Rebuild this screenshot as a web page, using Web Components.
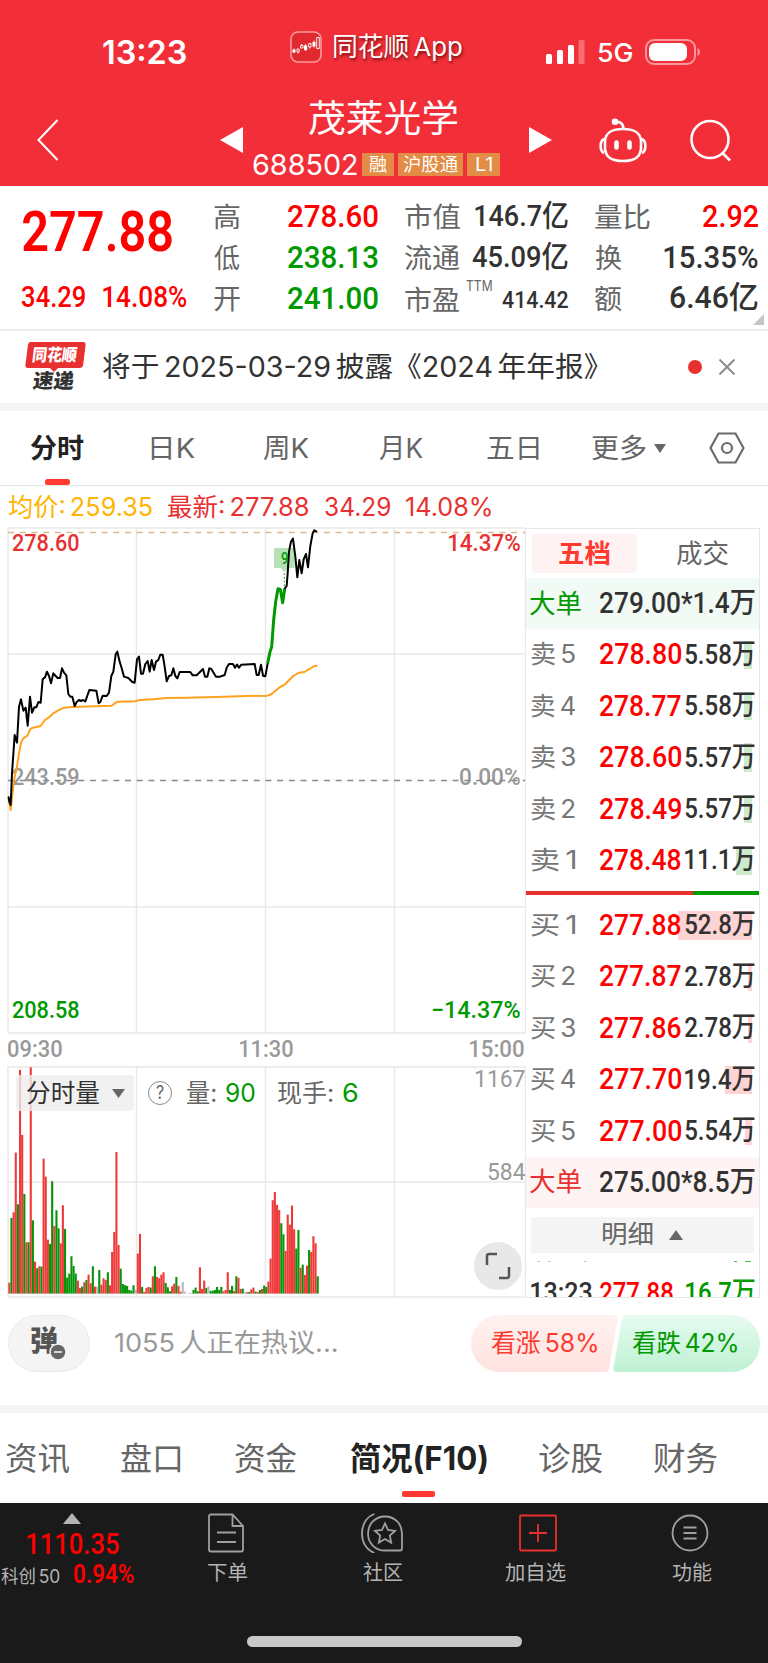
<!DOCTYPE html>
<html lang="zh-CN">
<head>
<meta charset="utf-8">
<meta name="viewport" content="width=device-width">
<title>茂莱光学 688502</title>
<style>
    html, body {
        margin: 0;
        background: #fff;
    }

    body {
        width: 768px;
        height: 1663px;
        overflow: hidden;
        font-family: Inter, "Noto Sans CJK SC", sans-serif;
        color: #323232;
    }
</style>
</head>
<body>
<stock-app></stock-app>

<script>
const NUM_FONT = 'Roboto, "Noto Sans CJK SC", sans-serif'
const pen = document.createElement('canvas').getContext('2d')

class BaseElement extends HTMLElement {
    constructor(){
        super()
        this.attachShadow({ mode: "open" })
    }

    render(){
        const template = document.createElement('template')
        template.innerHTML = `<style>${this.getStyles()}</style>${this.getTemplate()}`
        this.shadowRoot.appendChild(template.content.cloneNode(true))
    }

    connectedCallback(){
        this.render()
    }
}

// One line of text stretched so that its ink is exactly "w" pixels wide
class FitText extends BaseElement {
    getTemplate(){
        return `<span><slot></slot></span>`
    }

    getStyles(){
        const num = this.hasAttribute('num') ? `font-family: ${NUM_FONT};` : ''
        return `
            :host {
                display: block;
                flex: none;
                width: ${this.getAttribute('w')}px;
                margin-left: ${this.getAttribute('gap') || 0}px;
                font-size: ${this.getAttribute('size')}px;
                font-weight: ${this.getAttribute('weight') || 400};
                line-height: 1;
                white-space: nowrap;
                ${num}
            }
            span {
                display: inline-block;
                line-height: 1;
                vertical-align: top;
                word-spacing: ${this.getSpacing()}px;
                transform-origin: 0 50%;
            }
        `
    }

    // Spaces between Chinese and digits are drawn thin
    getSpacing(){
        return this.getAttribute('size') * -.12
    }

    connectedCallback(){
        super.connectedCallback()
        const style = getComputedStyle(this)
        pen.font = `${style.fontWeight} ${style.fontSize} ${style.fontFamily}`
        pen.wordSpacing = `${this.getSpacing()}px`
        const m = pen.measureText(this.textContent)
        const scale = this.getAttribute('w') / (m.actualBoundingBoxLeft + m.actualBoundingBoxRight)
        const dy = this.getAttribute('dy') || 0
        this.shadowRoot.querySelector('span').style.transform =
            `translate(${m.actualBoundingBoxLeft * scale}px, ${dy}px) scaleX(${scale})`
    }
}

class StatusBar extends BaseElement {
    getTemplate(){
        return `
            <fit-text gap="103" w="83" size="32" weight="600" dy="1">13:23</fit-text>
            <svg class="app" width="32" height="32" viewBox="0 0 32 32" fill="none" stroke="#fff">
                <rect x="1" y="1" width="30" height="30" rx="7" fill="#e02a2f" stroke="#f99a9d" stroke-width="1.6"/>
                <path d="M2.500 18.500h3v3h-3zM14 14.500h3.200v4.500H14zM22.500 11h3v4.500h-3z" fill="#fff" stroke="none"/>
                <path d="M7 18h2.200v3H7zM10.500 14.500H13V17h-2.500zM18.700 12.500h2.300v3.500h-2.300zM26.700 6.500h2.600v11h-2.600zM4 17.500v4.500M8 21v1.500M11.800 13v1.500M15.600 13v7M19.900 16v1.500M24 9.500v7" stroke-width=".9"/>
            </svg>
            <fit-text class="shadow" gap="12" w="128" size="26" dy="-5">同花顺 App</fit-text>
            <svg class="signal" width="39" height="24" viewBox="0 0 39 24" fill="#fff">
                <rect y="14" width="6" height="10" rx="1.500"/>
                <rect x="11" y="10" width="6" height="14" rx="1.500"/>
                <rect x="22" y="5" width="6" height="19" rx="1.500"/>
                <rect x="32.500" width="6" height="24" rx="1.500" opacity=".3"/>
            </svg>
            <fit-text gap="13" w="34" size="26" weight="500" dy="1">5G</fit-text>
            <svg class="battery" width="56" height="26" viewBox="0 0 56 26" fill="#fff">
                <rect x="1" y="1" width="49" height="24" rx="8" fill="none" stroke="#fff" stroke-opacity=".5" stroke-width="2"/>
                <rect x="4" y="4" width="38" height="18" rx="6"/>
                <path d="M52.500 9q2.500 1 2.500 4t-2.500 4z" opacity=".5"/>
            </svg>
        `
    }

    getStyles(){
        return `
            :host {
                display: flex;
                align-items: center;
                height: 84px;
                padding-top: 10px;
            }
            .app { margin: -11px 0 0 104px; }
            .shadow { text-shadow: 1px 2px 3px rgba(60, 0, 0, .7); }
            .signal { margin-left: 84px; }
            .battery { margin-left: 13px; }
        `
    }
}

class StockNav extends BaseElement {
    getTemplate(){
        return `
            <svg class="back" width="22" height="42" viewBox="0 0 22 42" fill="none" stroke="#fff" stroke-width="2">
                <path d="M20.500 1L1.500 21l19 20"/>
            </svg>
            <svg class="prev" width="23" height="26"><path d="M23 0v26L0 13z" fill="#fff"/></svg>
            <div class="name">
                <fit-text gap="66" w="148" size="37" dy="1">茂莱光学</fit-text>
                <div class="code">
                    <fit-text w="104" size="29">688502</fit-text>
                    <i style="width:32px;margin-left:1px"><fit-text w="18" size="18">融</fit-text></i>
                    <i style="width:65px"><fit-text w="55" size="18">沪股通</fit-text></i>
                    <i style="width:33px"><fit-text w="16" size="18">L1</fit-text></i>
                </div>
            </div>
            <svg class="next" width="23" height="26"><path d="M0 0v26l23-13z" fill="#fff"/></svg>
            <svg class="robot" width="48" height="45" viewBox="0 0 48 45" fill="none" stroke="#fff" stroke-width="2.600">
                <path d="M24 11C35 11 40.500 14 42 22v9C41 40 35 43 24 43S7 40 6 31v-9C7.500 14 13 11 24 11z"/>
                <path d="M5 21c-4.500 2-4.500 12 0 14M43 21c4.500 2 4.500 12 0 14M24.500 10.500C24 6 21.500 3.500 17 4"/>
                <path d="M17.500 24.500v5M30.500 24.500v5" stroke-width="4.600" stroke-linecap="round"/>
                <circle cx="16" cy="3.800" r="3.300" fill="#fff" stroke="none"/>
            </svg>
            <svg class="search" width="42" height="43" viewBox="0 0 42 43" fill="none" stroke="#fff" stroke-width="2.600">
                <circle cx="20" cy="20.500" r="18.500"/>
                <path d="M32.500 34l7.500 7.500"/>
            </svg>
        `
    }

    getStyles(){
        return `
            :host {
                display: flex;
                align-items: center;
                height: 92px;
            }
            .back { margin-left: 37px; }
            .prev { margin-left: 161px; }
            .name {
                width: 286px;
                height: 92px;
                padding-top: 5px;
                box-sizing: border-box;
            }
            .code {
                display: flex;
                align-items: center;
                height: 23px;
                gap: 4px;
                margin: 17px 0 0 10px;
            }
            .code i {
                display: flex;
                align-items: center;
                justify-content: center;
                height: 23px;
                background: #e28c45;
                font-style: normal;
            }
            .next { margin-left: 0; }
            .robot { margin-left: 47px; }
            .search { margin-left: 43px; }
        `
    }
}

class QuotePanel extends BaseElement {
    getTemplate(){
        return `
            <div class="main red">
                <fit-text num gap="1" w="149" size="55" weight="600" dy="1">277.88</fit-text>
                <div class="sub">
                    <fit-text num w="63" size="29" weight="500">34.29</fit-text>
                    <fit-text num gap="18" w="84" size="29" weight="500">14.08%</fit-text>
                </div>
            </div>
            <div class="col" style="width:164px">
                <p><fit-text w="26" size="27" dy="2">高</fit-text><fit-text class="red" num w="90" size="32" weight="500">278.60</fit-text></p>
                <p><fit-text w="26" size="27" dy="2">低</fit-text><fit-text class="green" num w="90" size="32" weight="500">238.13</fit-text></p>
                <p><fit-text w="26" size="27" dy="2">开</fit-text><fit-text class="green" num w="90" size="32" weight="500">241.00</fit-text></p>
            </div>
            <div class="col" style="width:163px">
                <p><fit-text w="55" size="27" dy="2">市值</fit-text><fit-text class="dark" num w="93" size="30" weight="500">146.7亿</fit-text></p>
                <p><fit-text w="55" size="27" dy="2">流通</fit-text><fit-text class="dark" num w="96" size="30" weight="500">45.09亿</fit-text></p>
                <p><fit-text w="54" size="27" dy="3">市盈</fit-text><fit-text class="ttm" gap="7" w="26" size="14" dy="-12">TTM</fit-text><fit-text class="dark" num w="66" size="24" weight="500" dy="2">414.42</fit-text></p>
            </div>
            <div class="col" style="width:163px">
                <p><fit-text w="55" size="27" dy="2">量比</fit-text><fit-text class="red" num w="55" size="32" weight="500">2.92</fit-text></p>
                <p><fit-text w="27" size="27" dy="2">换</fit-text><fit-text class="dark" num w="94" size="32" weight="500">15.35%</fit-text></p>
                <p><fit-text w="27" size="27" dy="2">额</fit-text><fit-text class="dark" num w="88" size="31" weight="500">6.46亿</fit-text></p>
            </div>
            <svg class="corner" width="11" height="11"><path d="M11 0v11H0z" fill="#c4c4c4"/></svg>
        `
    }

    getStyles(){
        return `
            :host {
                display: flex;
                gap: 27px;
                height: 145px;
                padding: 9px 0 0 22px;
                box-sizing: border-box;
                border-bottom: 2px solid #ededed;
                color: #666;
                position: relative;
            }
            .red { color: #fe0000; }
            .green { color: #009900; }
            .dark { color: #323232; }
            .main { width: 165px; padding-top: 9px; }
            .sub { display: flex; margin-top: 24px; }
            .col p {
                display: flex;
                align-items: center;
                justify-content: space-between;
                margin: 0;
                height: 41px;
            }
            .ttm { margin-right: auto; }
            .corner { position: absolute; right: 4px; bottom: 4px; }
        `
    }
}

class NewsBar extends BaseElement {
    getTemplate(){
        return `
            <div class="badge">
                <svg width="61" height="31" viewBox="0 0 61 31">
                    <path d="M6 0h52q3 0 2.600 3l-2.500 20q-.5 3-3.500 3H33l-4 4-4-4H3q-3 0-2.600-3L3 3q.5-3 3-3z" fill="#e93030"/>
                </svg>
                <fit-text class="brand" w="44" size="17" weight="900">同花顺</fit-text>
                <fit-text class="fast" gap="8" w="41" size="20" weight="900">速递</fit-text>
            </div>
            <fit-text gap="17" w="495" size="28">将于 2025-03-29 披露《2024 年年报》</fit-text>
            <b></b>
            <svg class="close" width="16" height="16" viewBox="0 0 16 16" stroke="#8d8d8d" stroke-width="2">
                <path d="M.5.500l15 15M15.500.500l-15 15"/>
            </svg>
        `
    }

    getStyles(){
        return `
            :host {
                display: flex;
                align-items: center;
                height: 72px;
                border-bottom: 8px solid #f4f4f4;
            }
            .badge {
                width: 61px;
                height: 50px;
                margin-left: 25px;
                position: relative;
            }
            .badge svg { display: block; }
            .brand { position: absolute; left: 8px; top: 5px; color: #fff; transform: skewX(-7deg); }
            .fast { margin-top: -2px; transform: skewX(-7deg); }
            b {
                width: 14px;
                height: 14px;
                margin-left: 90px;
                border-radius: 50%;
                background: #e93030;
            }
            .close { margin-left: 17px; }
        `
    }
}

class PeriodTabs extends BaseElement {
    getTemplate(){
        return `
            <fit-text class="on" gap="30" w="54" size="27" weight="700">分时</fit-text>
            <fit-text gap="67" w="44" size="27">日K</fit-text>
            <fit-text gap="68" w="46" size="27">周K</fit-text>
            <fit-text gap="70" w="44" size="27">月K</fit-text>
            <fit-text gap="64" w="52" size="27">五日</fit-text>
            <fit-text gap="53" w="54" size="27">更多</fit-text>
            <svg class="more" width="12" height="9"><path d="M0 0h12L6 9z" fill="#666"/></svg>
            <svg class="gear" width="36" height="32" viewBox="0 0 36 32" fill="none" stroke="#6b6b6b" stroke-width="2.200">
                <path d="M9.500 1.500h17L34.500 16l-8 14.500h-17L1.500 16z"/>
                <circle cx="18" cy="16" r="5"/>
            </svg>
            <u></u>
        `
    }

    getStyles(){
        return `
            :host {
                display: flex;
                align-items: center;
                height: 74px;
                border-bottom: 1px solid #e4e4e4;
                color: #666;
                position: relative;
            }
            .on { color: #222; }
            .more { margin-left: 8px; }
            .gear { margin-left: 43px; }
            u {
                position: absolute;
                left: 45px;
                bottom: 0;
                width: 25px;
                height: 6px;
                border-radius: 2.500px;
                background: #ff3a30;
            }
        `
    }
}

class PriceSummary extends BaseElement {
    getTemplate(){
        return `
            <fit-text class="avg" gap="8" w="144" size="25" dy="1">均价: 259.35</fit-text>
            <fit-text gap="16" w="140" size="25" dy="1">最新: 277.88</fit-text>
            <fit-text gap="17" w="65" size="25" dy="1">34.29</fit-text>
            <fit-text gap="16" w="85" size="25" dy="1">14.08%</fit-text>
        `
    }

    getStyles(){
        return `
            :host {
                display: flex;
                align-items: center;
                height: 41px;
                color: #e93030;
            }
            .avg { color: #ffb400; }
        `
    }
}

// Lines are plotted on a 3x grid whose origin is 8px above the frame
const PRICE = '26,832 28,845 32,855 36,760 44,645 51,668 57,560 63,538 70,572 77,563 83,617 90,530 96,578 103,562 109,562 115,546 122,548 128,478 135,472 141,455 147,468 153,490 160,460 167,468 173,474 180,474 186,445 192,458 199,466 205,522 211,530 217,530 224,558 230,546 237,540 243,543 249,540 256,544 268,510 289,512 296,550 301,546 308,527 320,528 327,518 334,468 340,455 347,403 352,395 359,425 366,448 372,470 385,474 397,486 404,488 411,418 417,410 423,461 429,461 436,432 443,423 449,455 455,420 462,450 468,425 475,420 481,404 488,404 494,440 500,484 507,468 514,466 520,445 526,468 532,475 539,456 571,456 578,466 590,466 609,447 615,470 622,470 628,445 634,447 648,470 660,470 674,465 680,443 687,432 699,432 705,443 711,434 717,443 724,434 764,432 770,465 776,465 783,434 789,467 796,469 803,430'
const RALLY = '803,430 810,395 815,380 821,300 827,245 834,206 841,208 848,248 854,206'
const LAST = '854,206 860,198 863,160 867,95 873,65 879,56 886,110 892,172 898,120 905,160 911,118 918,102 924,142 931,78 938,40 943,31 949,34'
const AVERAGE = '26,835 32,870 38,815 44,770 50,745 57,700 64,665 70,655 83,646 90,628 96,624 122,618 135,600 147,592 160,580 173,572 192,563 217,561 335,557 352,545 405,544 420,540 460,538 500,534 560,533 650,531 740,528 803,527 815,522 840,501 855,493 880,468 895,459 915,455 943,438 950,437'

class PriceChart extends BaseElement {
    getTemplate(){
        return `
            <div class="plot">
                <span class="mid left"><fit-text num w="67" size="24" weight="500">243.59</fit-text></span>
                <span class="mid right"><fit-text num w="60" size="24" weight="500">0.00%</fit-text></span>
                <svg width="526" height="508" viewBox="0 527 526 508" fill="none">
                    <path d="M8 528h518M8 654h518M8 907h518M8 1033h518M8 528v505M136.500 528v505M265.500 528v505M394.500 528v505M525.500 528v505" stroke="#e9e9e9" stroke-width="1.500"/>
                    <path d="M8 532.500h517" stroke="#dcbb8b" stroke-width="1.300" stroke-dasharray="6 5.700"/>
                    <path d="M8 780.500h517" stroke="#888" stroke-width="1.300" stroke-dasharray="6 5.700"/>
                    <g transform="translate(0 520) scale(.33333)" stroke-linejoin="round" stroke-linecap="round">
                        <path d="M826 84h54q4 0 4 4v52q0 4-4 4h-16l-11 13-11-13h-16q-4 0-4-4V88q0-4 4-4z" fill="#b5e1b5"/>
                        <path d="M853 160v40" stroke="#009900" stroke-width="3" stroke-dasharray="5 6" stroke-linecap="butt"/>
                        <polyline points="${AVERAGE}" stroke="#ffa21d" stroke-width="6"/>
                        <polyline points="${PRICE}" stroke="#000" stroke-width="6"/>
                        <polyline points="${LAST}" stroke="#000" stroke-width="6"/>
                        <polyline points="${RALLY}" stroke="#009900" stroke-width="9" stroke-linecap="butt"/>
                    </g>
                </svg>
                <span class="flag"><fit-text num w="7" size="17" weight="500">9</fit-text></span>
                <span class="top left red"><fit-text num w="67" size="24" weight="500">278.60</fit-text></span>
                <span class="top right red"><fit-text num w="71" size="24" weight="500">14.37%</fit-text></span>
                <span class="low left green"><fit-text num w="67" size="24" weight="500">208.58</fit-text></span>
                <span class="low right green"><fit-text num w="88" size="24" weight="500">−14.37%</fit-text></span>
            </div>
            <div class="times">
                <fit-text num w="54" size="24" weight="500">09:30</fit-text>
                <fit-text num w="53" size="24" weight="500">11:30</fit-text>
                <fit-text num w="54" size="24" weight="500">15:00</fit-text>
            </div>
        `
    }

    getStyles(){
        return `
            :host { display: block; height: 539px; color: #999; }
            .plot { position: relative; height: 508px; }
            svg { display: block; position: relative; }
            span { position: absolute; }
            .left { left: 12px; }
            .right { right: 6px; }
            .top { top: 4px; }
            .mid { top: 237.500px; }
            .low { top: 471px; }
            .red { color: #e93030; }
            .green, .flag { color: #009900; }
            .flag { left: 281px; top: 23px; }
            .times {
                display: flex;
                justify-content: space-between;
                padding: 2px 2px 0 8px;
            }
        `
    }
}

// r: up, g: down, s: flat; the number is the height in thirds of a pixel
const VOLUME = 'r33 g227 r244 r423 g268 r671 r476 g299 r154 g154 r679 g220 r96 g76 r82 g81 r405 r351 r162 g149 g337 r203 g250 g196 r151 r265 g194 g48 g60 g112 g83 g60 r39 r17 g21 r34 g41 r57 r31 g82 r21 s21 g71 r27 r46 r41 g64 r25 r125 r185 r425 r146 g75 g29 g25 g23 g11 g9 g25 s11 r120 r179 g20 r5 r17 r20 g18 r52 g82 r50 r46 r57 r64 g32 g19 g7 r22 r30 g50 r23 r6 s35 s6 s0 s2 s2 g11 g18 g7 r79 r14 r39 g17 s22 g8 g9 g11 g20 g11 g20 r7 r11 r64 g11 g23 r8 g52 r47 r14 g15 s4 r4 g5 r13 r18 g6 r5 g11 r14 g24 g20 r36 r105 r280 r305 r266 r251 g211 g178 r128 r237 r207 r264 r193 g135 g191 r77 g87 r56 r84 g131 r125 r172 r151 g52'
const VOLUME_COLORS = { r: '#ee3a3a', g: '#089308', s: '#bbb' }

class VolumeChart extends BaseElement {
    getBars(){
        return VOLUME.split(' ').map((bar, i) => {
            const h = bar.slice(1) / 3
            const x = 8.300 + i * 2.1413
            return `<rect x="${x.toFixed(2)}" y="${(1293.6 - h).toFixed(2)}" width="2.1" height="${h.toFixed(2)}" fill="${VOLUME_COLORS[bar[0]]}"/>`
        }).join('')
    }

    getTemplate(){
        return `
            <svg class="chart" width="526" height="232" viewBox="0 1066 526 232">
                <path d="M8 1067h518M8 1182h518M8 1297h518M8 1066v231M136.500 1066v231M265.500 1066v231M394.500 1066v231M525.500 1066v231" stroke="#e9e9e9" stroke-width="1.500" fill="none"/>
                ${this.getBars()}
            </svg>
            <div class="tools">
                <div class="pick">
                    <fit-text w="72" size="25">分时量</fit-text>
                    <svg width="13" height="9"><path d="M0 0h13L6.500 9z" fill="#666"/></svg>
                </div>
                <div class="help"><fit-text w="8" size="18">?</fit-text></div>
                <fit-text gap="15" w="29" size="25">量:</fit-text>
                <fit-text class="green" gap="10" w="29" size="25">90</fit-text>
                <fit-text gap="23" w="55" size="25">现手:</fit-text>
                <fit-text class="green" gap="10" w="14" size="25">6</fit-text>
            </div>
            <div class="max"><fit-text num w="49" size="24">1167</fit-text></div>
            <div class="half"><fit-text num w="37" size="24">584</fit-text></div>
            <svg class="expand" width="48" height="48" fill="none" stroke="#555" stroke-width="2.500">
                <circle cx="24" cy="24" r="24" fill="#e8e8e8" stroke="none"/>
                <path d="M13 23v-9q0-2 2-2h8M35 25v9q0 2-2 2h-8"/>
            </svg>
        `
    }

    getStyles(){
        return `
            :host { display: block; position: relative; height: 232px; }
            .chart { display: block; }
            .tools {
                position: absolute;
                left: 16px;
                top: 9px;
                display: flex;
                align-items: center;
                color: #666;
            }
            .pick {
                display: flex;
                align-items: center;
                gap: 13px;
                width: 107px;
                height: 36px;
                padding-left: 11px;
                border-radius: 4px;
                background: rgba(238, 238, 238, .8);
                color: #323232;
            }
            .help {
                display: flex;
                align-items: center;
                justify-content: center;
                width: 22px;
                height: 22px;
                margin-left: 14px;
                border: 1.500px solid #888;
                border-radius: 50%;
            }
            .green { color: #009900; }
            .max, .half { position: absolute; right: 1px; color: #999; }
            .max { top: 1px; }
            .half { top: 94px; }
            .expand { position: absolute; left: 474px; top: 176px; }
        `
    }
}

class BookRow extends BaseElement {
    getTemplate(){
        const [label, price, volume] = ['label', 'price', 'volume'].map(name => this.getAttribute(name))
        return `
            <i style="width:${this.getAttribute('heat')}px"></i>
            <fit-text class="label" w="44" size="25">${label}</fit-text>
            <fit-text class="price" num gap="25" w="81" size="29" weight="500">${price}</fit-text>
            <fit-text num gap="4" w="70" size="28" weight="500">${volume}</fit-text>
        `
    }

    getStyles(){
        return `
            :host {
                display: flex;
                align-items: center;
                height: 51.450px;
                padding-left: 5px;
                position: relative;
            }
            fit-text { position: relative; }
            .label { color: #777; }
            .price { color: #fe0000; }
            i {
                position: absolute;
                right: 7px;
                top: 11.500px;
                height: 28.500px;
                background: ${this.getAttribute('side') === 'buy' ? '#fdd3d3' : '#cdeacd'};
            }
        `
    }
}

class OrderBook extends BaseElement {
    getRows(rows, side){
        return rows.map(([label, price, volume, heat]) =>
            `<book-row side="${side}" label="${label}" price="${price}" volume="${volume}" heat="${heat}"></book-row>`
        ).join('')
    }

    getTemplate(){
        const sells = [
            ['卖 5', '278.80', '5.58万', 8],
            ['卖 4', '278.77', '5.58万', 8],
            ['卖 3', '278.60', '5.57万', 8],
            ['卖 2', '278.49', '5.57万', 8],
            ['卖 1', '278.48', '11.1万', 16],
        ]
        const buys = [
            ['买 1', '277.88', '52.8万', 74],
            ['买 2', '277.87', '2.78万', 4],
            ['买 3', '277.86', '2.78万', 4],
            ['买 4', '277.70', '19.4万', 27],
            ['买 5', '277.00', '5.54万', 7],
        ]

        return `
            <div class="tabs">
                <div class="on"><fit-text w="51" size="26" weight="700">五档</fit-text></div>
                <fit-text gap="39" w="52" size="26">成交</fit-text>
            </div>
            <div class="big sell"><fit-text class="tag" w="51" size="26">大单</fit-text><fit-text num gap="19" w="155" size="29" weight="500">279.00*1.4万</fit-text></div>
            ${this.getRows(sells, 'sell')}
            <div class="ratio"></div>
            ${this.getRows(buys, 'buy')}
            <div class="big buy"><fit-text class="tag" w="51" size="26">大单</fit-text><fit-text num gap="19" w="155" size="29" weight="500">275.00*8.5万</fit-text></div>
            <div class="detail">
                <fit-text w="51" size="25">明细</fit-text>
                <svg width="14" height="10"><path d="M0 10h14L7 0z" fill="#666"/></svg>
            </div>
            <div class="scrap"><s></s><s></s><s></s><s></s><s></s></div>
            <div class="tick">
                <fit-text num w="61" size="28" weight="500">13:23</fit-text>
                <fit-text class="red" num gap="8" w="73" size="28" weight="500">277.88</fit-text>
                <fit-text class="green" num gap="13" w="69" size="28" weight="500">16.7万</fit-text>
            </div>
        `
    }

    getStyles(){
        return `
            :host {
                display: block;
                width: 233px;
                height: 768px;
                border: 1px solid #e6e6e6;
                border-left: 0;
                overflow: hidden;
            }
            .tabs { display: flex; align-items: center; height: 49px; color: #666; }
            .on {
                display: flex;
                align-items: center;
                justify-content: center;
                width: 105px;
                height: 39px;
                margin-left: 6px;
                border-radius: 4px;
                background: #fff2f2;
                color: #ff3a30;
            }
            .big { display: flex; align-items: center; height: 51px; padding-left: 4px; }
            .sell { background: #f2faf6; }
            .buy { background: #fff4f4; }
            .sell .tag, .green { color: #009900; }
            .buy .tag { color: #e93030; }
            .red { color: #fe0000; }
            .ratio {
                height: 4px;
                margin: 5px 0 4.500px;
                background: linear-gradient(90deg, #e93030 167px, #009900 167px);
            }
            .detail {
                display: flex;
                align-items: center;
                justify-content: center;
                gap: 16px;
                height: 36px;
                margin: 9px 5px 0;
                background: #f4f4f4;
                color: #666;
            }
            .scrap { height: 2px; margin-top: 8px; padding-left: 11px; display: flex; }
            .scrap s { width: 3px; height: 1px; background: #ccc; margin-right: 8px; }
            .scrap s:nth-child(2) { margin-right: 33px; }
            .scrap s:nth-child(3) { margin-right: 147px; }
            .scrap s:nth-child(4) { background: #4b4; margin-right: 8px; }
            .scrap s:nth-child(5) { width: 6px; background: #4b4; margin: 0; }
            .tick { display: flex; align-items: center; padding: 16px 0 0 5px; }
        `
    }
}

class TalkBar extends BaseElement {
    getTemplate(){
        return `
            <div class="danmu">
                <fit-text w="27" size="28" weight="900">弹</fit-text>
                <svg width="18" height="18" viewBox="0 0 18 18">
                    <circle cx="9" cy="9" r="8" fill="#666" stroke="#f4f4f4" stroke-width="1.500"/>
                    <path d="M5 9h8" stroke="#fff" stroke-width="1.500"/>
                </svg>
            </div>
            <fit-text class="talk" gap="25" w="222" size="26">1055 人正在热议...</fit-text>
            <div class="vote">
                <svg width="289" height="57" viewBox="0 0 289 57">
                    <defs>
                        <linearGradient id="up" x2="0" y2="1"><stop stop-color="#fff2f0"/><stop offset="1" stop-color="#ffe2df"/></linearGradient>
                        <linearGradient id="down" x2="0" y2="1"><stop stop-color="#e6fbf0"/><stop offset="1" stop-color="#bff1d4"/></linearGradient>
                    </defs>
                    <path d="M28.500 0H143q4 0 3.500 4L138 53q-.6 4-4 4H28.500a28.500 28.500 0 0 1 0-57z" fill="url(#up)"/>
                    <path d="M260.500 0H155q-3.500 0-4 4l-8.500 49q-.5 4 3.500 4h114.500a28.500 28.500 0 0 0 0-57z" fill="url(#down)"/>
                </svg>
                <div class="labels">
                    <fit-text class="up" w="106" size="25">看涨 58%</fit-text>
                    <fit-text class="down" gap="35" w="105" size="25">看跌 42%</fit-text>
                </div>
            </div>
        `
    }

    getStyles(){
        return `
            :host {
                display: flex;
                align-items: center;
                height: 58px;
                padding: 16px 0 33px 8px;
                border-bottom: 8px solid #f4f4f4;
            }
            .danmu {
                display: flex;
                align-items: center;
                width: 58px;
                height: 55px;
                padding-left: 22px;
                border: 1px solid #ebebeb;
                border-radius: 29px;
                background: #f4f4f4;
                color: #555;
            }
            .danmu fit-text { margin-top: -4px; }
            .danmu svg { margin: 18px 0 0 -9px; position: relative; }
            .talk { color: #999; }
            .vote { position: relative; margin-left: 134px; height: 57px; }
            .labels { position: absolute; left: 20px; top: 16px; display: flex; }
            .up { color: #ff3a30; }
            .down { color: #009900; }
        `
    }
}

class InfoTabs extends BaseElement {
    getTemplate(){
        return `
            <fit-text gap="6" w="63" size="32" dy="1">资讯</fit-text>
            <fit-text gap="52" w="60" size="32" dy="1">盘口</fit-text>
            <fit-text gap="54" w="62" size="32" dy="1">资金</fit-text>
            <fit-text class="on" gap="53" w="137" size="32" weight="700" dy="1">简况(F10)</fit-text>
            <fit-text gap="52" w="63" size="32" dy="1">诊股</fit-text>
            <fit-text gap="52" w="63" size="32" dy="1">财务</fit-text>
            <u></u>
        `
    }

    getStyles(){
        return `
            :host {
                display: flex;
                align-items: center;
                height: 90px;
                color: #666;
                position: relative;
            }
            .on { color: #222; }
            u {
                position: absolute;
                left: 402px;
                bottom: 6px;
                width: 33px;
                height: 6px;
                border-radius: 2px;
                background: #ff3a30;
            }
        `
    }
}

class BottomBar extends BaseElement {
    getTemplate(){
        return `
            <div class="index">
                <svg width="18" height="11"><path d="M0 11h18L9 0z" fill="#b4b4b4"/></svg>
                <fit-text num gap="27" w="92" size="29" weight="500" dy="1">1110.35</fit-text>
                <div>
                    <fit-text class="name" w="59" size="18" dy="2">科创 50</fit-text>
                    <fit-text num gap="14" w="60" size="25" weight="600">0.94%</fit-text>
                </div>
            </div>
            <div class="item" style="width:156px">
                <svg width="38" height="40" viewBox="0 0 38 40" style="margin-left:-3px">
                    <path d="M4 1.500h21.500L36 13v23.500q0 2-2 2H4q-2 0-2-2v-33q0-2 2-2zM25.500 1.500V13H36M10 19.500h19M10 29h19"/>
                </svg>
                <fit-text w="39" size="20">下单</fit-text>
            </div>
            <div class="item" style="width:156px">
                <svg width="42" height="40" viewBox="0 0 42 40" style="margin-left:-3px">
                    <path d="M24 3.500C34 3.500 41 11 41 20.500v15q0 2-2 2H24C14 37.500 7 30 7 20.500S14 3.500 24 3.500zM13.500 1C5 4 1 12 1 20.500S5 37 13.500 40"/>
                    <path d="M24 10.500l3 6.500 7 .8-5.200 4.800 1.400 7-6.200-3.600-6.200 3.600 1.400-7-5.200-4.800 7-.8z"/>
                </svg>
                <fit-text w="40" size="20">社区</fit-text>
            </div>
            <div class="item add" style="width:149px">
                <svg width="42" height="40" viewBox="0 0 42 40" style="margin-left:4px">
                    <path d="M4 2.500h34q1 0 1 1v33q0 1-1 1H4q-1 0-1-1v-33q0-1 1-1zM21 11v18M12 20h18"/>
                </svg>
                <fit-text w="61" size="20">加自选</fit-text>
            </div>
            <div class="item" style="width:152px;padding-left:6px">
                <svg width="38" height="40" viewBox="0 0 38 40" style="margin-left:-4px">
                    <circle cx="19" cy="20" r="17.500"/>
                    <path d="M12.500 14.500h13M12.500 20h13M12.500 25.500h13"/>
                </svg>
                <fit-text w="40" size="20">功能</fit-text>
            </div>
            <div class="home"></div>
        `
    }

    getStyles(){
        return `
            :host {
                display: flex;
                flex-wrap: wrap;
                align-content: flex-start;
                height: 160px;
                background: #1a1a1a;
                color: #b4b4b4;
            }
            .index { width: 149px; height: 133px; color: #fe0000; }
            .index svg { display: block; margin: 10px 0 5px 63px; }
            .index div { display: flex; align-items: center; margin-top: 4px; padding-left: 1px; }
            .name { color: #b4b4b4; }
            .item { padding-top: 10px; display: flex; flex-direction: column; align-items: center; gap: 10px; }
            .item svg { fill: none; stroke: #9f9f9f; stroke-width: 1.800; }
            .item.add svg { stroke: #e93030; }
            .home {
                width: 275px;
                height: 11px;
                margin-left: 247px;
                border-radius: 6px;
                background: #c8c8c8;
            }
        `
    }
}

class StockApp extends BaseElement {
    getTemplate(){
        return `
            <header>
                <status-bar></status-bar>
                <stock-nav></stock-nav>
            </header>
            <quote-panel></quote-panel>
            <news-bar></news-bar>
            <period-tabs></period-tabs>
            <price-summary></price-summary>
            <main>
                <div>
                    <price-chart></price-chart>
                    <volume-chart></volume-chart>
                </div>
                <order-book></order-book>
            </main>
            <talk-bar></talk-bar>
            <info-tabs></info-tabs>
            <bottom-bar></bottom-bar>
        `
    }

    getStyles(){
        return `
            :host { display: block; width: 768px; }
            header { background: #f22f38; color: #fff; height: 186px; }
            main { display: grid; grid-template-columns: 526px 234px; height: 771px; }
            order-book { margin-top: 1px; }
        `
    }
}

customElements.define("fit-text", FitText)
customElements.define("status-bar", StatusBar)
customElements.define("stock-nav", StockNav)
customElements.define("quote-panel", QuotePanel)
customElements.define("news-bar", NewsBar)
customElements.define("period-tabs", PeriodTabs)
customElements.define("price-summary", PriceSummary)
customElements.define("price-chart", PriceChart)
customElements.define("volume-chart", VolumeChart)
customElements.define("book-row", BookRow)
customElements.define("order-book", OrderBook)
customElements.define("talk-bar", TalkBar)
customElements.define("info-tabs", InfoTabs)
customElements.define("bottom-bar", BottomBar)
customElements.define("stock-app", StockApp)
</script>
</body>
</html>
